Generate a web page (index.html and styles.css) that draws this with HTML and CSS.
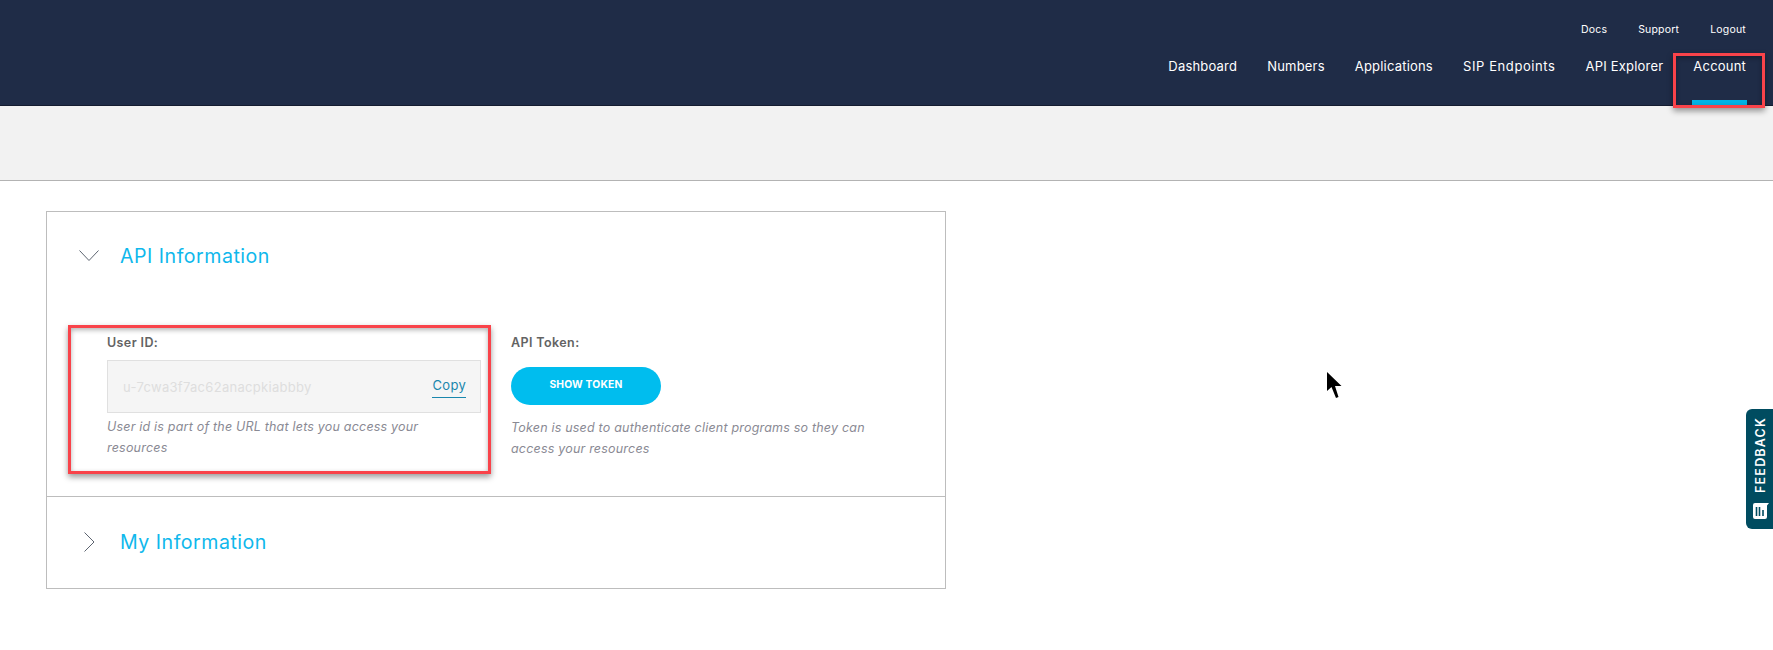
FILE: index.html
```html
<!DOCTYPE html>
<html lang="en">
<head>
<meta charset="utf-8">
<title>Account</title>
<link rel="stylesheet" href="styles.css">
</head>
<body>
<header class="topbar">
  <nav class="util-nav">
    <a>Docs</a><a>Support</a><a>Logout</a>
  </nav>
  <nav class="main-nav">
    <a>Dashboard</a><a>Numbers</a><a>Applications</a><a>SIP Endpoints</a><a>API Explorer</a><a class="active">Account</a>
  </nav>
</header>
<div class="subbar"></div>
<main class="content">
  <section class="card">
    <div class="panel">
      <div class="panel-head">
        <svg class="chev" width="20" height="12" viewBox="0 0 20 12"><path d="M0.5 0.5 L10 10.5 L19.5 0.5" fill="none" stroke="#5c6470" stroke-width="1"/></svg>
        <h2>API Information</h2>
      </div>
      <div class="fields">
        <div class="field">
          <label>User ID:</label>
          <div class="readonly"><span class="value">u-7cwa3f7ac62anacpkiabbby</span><a class="copy">Copy</a></div>
          <p class="hint">User id is part of the URL that lets you access your resources</p>
        </div>
        <div class="field">
          <label>API Token:</label>
          <button class="pill">SHOW TOKEN</button>
          <p class="hint">Token is used to authenticate client programs so they can access your resources</p>
        </div>
      </div>
    </div>
    <div class="panel closed">
      <div class="panel-head">
        <svg class="chev" width="20" height="20" viewBox="0 0 20 20"><path d="M5.5 0.5 L15 10 L5.5 19.5" fill="none" stroke="#5c6470" stroke-width="1"/></svg>
        <h2>My Information</h2>
      </div>
    </div>
  </section>
</main>
<div class="mark mark-nav"></div>
<div class="mark mark-user"></div>
<svg class="cursor" width="17" height="28" viewBox="0 0 17 28"><path d="M1 1 L1 20 L5.5 16 L10 27 L12.5 26 L9 15 L15.5 15 Z" fill="#000"/></svg>
<aside class="feedback">
  <span class="feedback-text">FEEDBACK</span>
  <svg class="feedback-icon" width="16" height="16" viewBox="0 0 16 16"><path d="M2 0 H16 L14 2.5 V14 a2 2 0 0 1 -2 2 H2 a2 2 0 0 1 -2 -2 V2 a2 2 0 0 1 2 -2 Z" fill="#fff"/><path d="M3.5 4 V13 M6.5 4 V13 M10 7 V13" stroke="#004c60" stroke-width="1.6"/></svg>
</aside>
</body>
</html>
```
FILE: styles.css
```css
* { box-sizing: border-box; }
html, body { margin: 0; padding: 0; background: #fff; height: 650px; overflow: hidden; }
body { font-family: "Inter", "Liberation Sans", sans-serif; color: #5f6368; position: relative; }

.topbar {
  height: 106px;
  background: #1f2c47;
  border-bottom: 1px solid #141c30;
  display: flex;
  flex-direction: column;
  align-items: flex-end;
  padding: 23px 27px 0 0;
  color: #fff;
}
.util-nav { display: flex; gap: 31px; font-size: 10.5px; line-height: 14px; letter-spacing: 0.2px; height: 14px; }
.main-nav { display: flex; gap: 30px; margin-top: 19px; font-size: 13px; line-height: 20px; letter-spacing: 0.2px; align-items: flex-start; height: 50px; }
.main-nav a:nth-child(4) { letter-spacing: 0.6px; }
.main-nav a.active { position: relative; height: 49px; }
.main-nav a.active::after { content: ""; position: absolute; left: -1px; right: -1px; bottom: 0; height: 5px; background: #00b4e6; }

.subbar { height: 75px; background: #f2f2f2; border-bottom: 1px solid #b3b3b3; }

.content { padding: 30px 0 0 46px; }
.card { width: 900px; border: 1px solid #bdbdbd; }
.panel-head { display: flex; align-items: center; gap: 21px; padding-left: 32px; height: 87px; }
.chev { flex: 0 0 20px; }
.panel-head h2 { margin: 0; font-size: 19.6px; line-height: 28px; font-weight: 400; color: #0fb8ec; letter-spacing: 0.5px; }

.fields { display: flex; gap: 30px; padding: 36px 20px 0 60px; height: 197px; }
.field { width: 374px; }
.field label { display: block; font-size: 12.5px; line-height: 16px; font-weight: 600; color: #636363; letter-spacing: 0.4px; }
.readonly {
  margin-top: 9px; height: 53px; border: 1px solid #e0e0e0; background: #f5f5f5;
  display: flex; justify-content: space-between; align-items: center; padding: 0 14px 0 15px;
}
.value { font-size: 13px; color: #dedede; letter-spacing: 0.3px; }
.copy { font-size: 13px; line-height: 19px; color: #1a87ad; letter-spacing: 0.3px; border-bottom: 1px solid #1a87ad; padding-bottom: 2px; }
.pill {
  display: block; margin-top: 16px; margin-left: 0; width: 150px; height: 38px; border: 0; border-radius: 19px;
  background: #00bdee; color: #fff; font-family: inherit; font-size: 10.3px; font-weight: 700; letter-spacing: 0.2px; padding: 0 0 4px;
}
.hint { margin: 12px 0 0; font-size: 12.5px; line-height: 21px; font-style: italic; color: #8a8a94; letter-spacing: 0.2px; }
.field:first-child .hint { margin-top: 3px; }

.closed { border-top: 1px solid #bdbdbd; }
.closed .panel-head { height: 91px; padding: 0 0 2px 32px; }

.mark { position: absolute; border: 3px solid #f9434a; box-shadow: 0 3px 6px rgba(0,0,0,.4), inset 0 2px 5px rgba(0,0,0,.3); }
.mark-nav { left: 1673px; top: 53px; width: 92px; height: 55px; }
.mark-user { left: 68px; top: 325px; width: 423px; height: 149px; }

.cursor { position: absolute; left: 1326px; top: 371px; }

.feedback {
  position: absolute; right: 0; top: 409px; width: 27px; height: 120px;
  background: #004c60; border-radius: 6px 0 0 6px; color: #fff;
  display: flex; flex-direction: column; align-items: center; justify-content: flex-start; padding: 8px 0 10px 2px; gap: 10px;
}
.feedback-text { writing-mode: vertical-rl; transform: rotate(180deg); font-size: 12.5px; line-height: 14px; font-weight: 600; letter-spacing: 1.2px; white-space: nowrap; }
.feedback-icon { flex: 0 0 16px; }
```
